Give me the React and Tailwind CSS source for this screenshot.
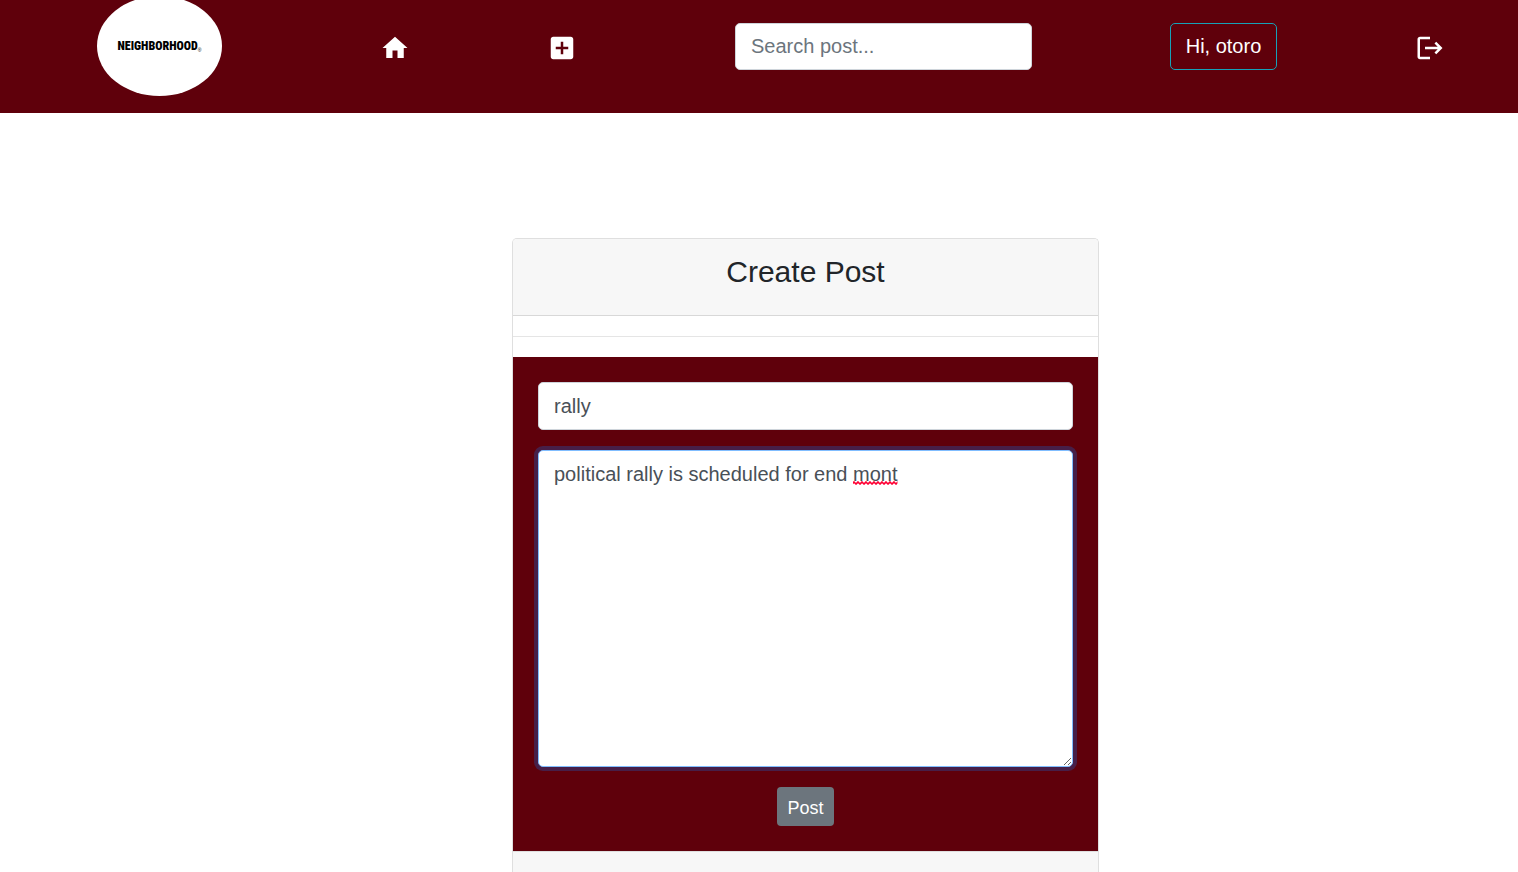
import { useState } from 'react';

function Icon({ d }) {
  return (
    <svg viewBox="0 0 24 24" fill="currentColor" className="size-[30px]" aria-hidden="true">
      <path d={d} />
    </svg>
  );
}

const HOME = 'M10 20V14H14V20H19V12H22L12 3L2 12H5V20H10Z';
const ADD =
  'M17 13H13V17H11V13H7V11H11V7H13V11H17M19 3H5C3.89 3 3 3.89 3 5V19C3 20.1 3.9 21 5 21H19C20.1 21 21 20.1 21 19V5C21 3.89 20.1 3 19 3Z';
const LOGOUT =
  'M17 7L15.59 8.41L18.17 11H8V13H18.17L15.59 15.58L17 17L22 12M4 5H12V3H4C2.9 3 2 3.9 2 5V19C2 20.1 2.9 21 4 21H12V19H4V5Z';

function NavBar() {
  return (
    <nav className="flex h-[113px] shrink-0 items-start justify-between bg-[#5f000b] pr-[73px] pl-[97px] text-xl text-white">
      <a
        href="#"
        className="-mt-1 mr-5 flex h-[100px] w-[125px] items-center justify-center rounded-[50%] bg-white text-black"
      >
        <span className="font-['Roboto_Condensed','Open_Sans_Condensed','Liberation_Sans_Narrow','Liberation_Sans',sans-serif] text-[12px] leading-3 font-black">
          NEIGHBORHOOD
        </span>
        <span className="pt-2 text-[5px] leading-none">®</span>
      </a>
      <a href="#" aria-label="Home" className="mt-[33px]">
        <Icon d={HOME} />
      </a>
      <a href="#" aria-label="New post" className="mt-[33px]">
        <Icon d={ADD} />
      </a>
      <input
        type="search"
        aria-label="Search post"
        placeholder="Search post..."
        className="mt-[23px] ml-5 h-[47px] w-[297px] rounded-[5px] border border-[#ced4da] bg-white px-[15px] text-[#495057] placeholder:text-[#6c757d]"
      />
      <button type="button" className="mt-[23px] h-[47px] rounded-[5px] border border-[#17a2b8] px-[15px] pb-0.5">
        Hi, otoro
      </button>
      <a href="#" aria-label="Log out" className="mt-[33px]">
        <Icon d={LOGOUT} />
      </a>
    </nav>
  );
}

export default function App() {
  const [title, setTitle] = useState('rally');
  const [body, setBody] = useState('political rally is scheduled for end mont');

  return (
    <div className="flex min-h-screen flex-col bg-white font-['Liberation_Sans',Arial,sans-serif] text-xl text-[#212529]">
      <NavBar />
      <main className="flex flex-1 flex-col pt-[125px] pl-[512px]">
        <section className="flex w-[587px] max-w-full flex-1 flex-col rounded-t-[5px] border border-b-0 border-[#dfdfdf]">
          <header className="h-[77px] rounded-t-[4px] border-b border-[#d8d8d8] bg-[#f7f7f7] pt-[15px] text-center">
            <h1 className="text-[30px] leading-9">Create Post</h1>
          </header>
          <hr className="my-5 border-[#e5e5e5]" />
          <form className="flex flex-col items-center bg-[#5f000b] p-[25px]" onSubmit={(e) => e.preventDefault()}>
            <input
              type="text"
              aria-label="Title"
              value={title}
              onChange={(e) => setTitle(e.target.value)}
              className="h-12 w-full rounded-[5px] border border-[#ced4da] bg-white px-[15px] text-[#495057]"
            />
            <div className="relative mt-5 h-[317px] w-full">
              <textarea
                aria-label="Post"
                value={body}
                onChange={(e) => setBody(e.target.value)}
                className="block h-full w-full rounded-[5px] border border-[#80bdff] bg-white px-[15px] py-2 leading-[30px] text-[#495057] ring-4 ring-[#007bff]/25 outline-none"
              />
              <div
                aria-hidden="true"
                className="pointer-events-none absolute top-[9px] left-4 leading-[30px] whitespace-pre text-transparent"
              >
                political rally is scheduled for end{' '}
                <span className="relative">
                  mont
                  <svg className="absolute bottom-0 left-0 h-1 w-full" fill="none">
                    <defs>
                      <pattern id="wave" width="4" height="4" patternUnits="userSpaceOnUse">
                        <path d="M-1 3L1 1L3 3L5 1" stroke="#ff0033" strokeWidth="1.6" />
                      </pattern>
                    </defs>
                    <rect width="100%" height="4" fill="url(#wave)" />
                  </svg>
                </span>
              </div>
            </div>
            <button
              type="submit"
              className="mt-5 h-[39px] rounded-[4px] bg-[#6c757d] px-2.5 pt-0.5 text-lg text-white"
            >
              Post
            </button>
          </form>
          <footer className="min-h-5 flex-1 border-t border-[#dfdfdf] bg-[#f7f7f7]" />
        </section>
      </main>
    </div>
  );
}
